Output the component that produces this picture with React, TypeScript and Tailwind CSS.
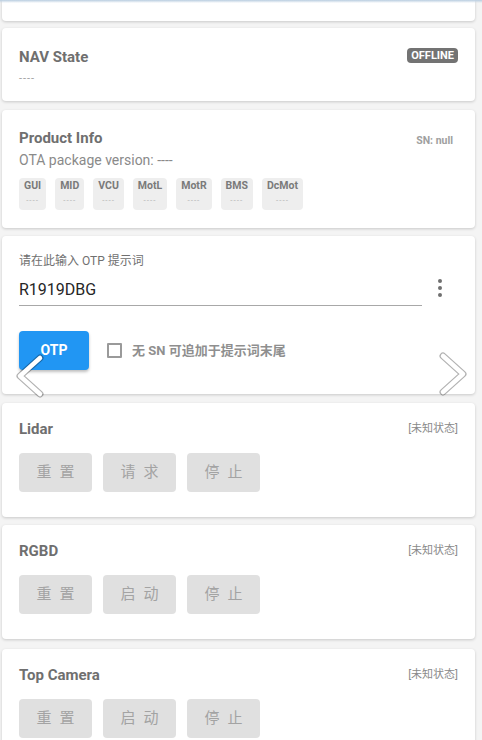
import React from "react";

const font = { fontFamily: 'Roboto, "Noto Sans CJK SC", sans-serif' };

function Card({ children, className = "" }: { children?: React.ReactNode; className?: string }) {
  return (
    <div className={`ml-[2px] mr-[7px] bg-white rounded-[4px] shadow-[0_1px_3px_rgba(0,0,0,0.18)] px-[17px] ${className}`}>
      {children}
    </div>
  );
}

function GrayBtn({ label }: { label: string }) {
  return (
    <div className="w-[73px] h-[39px] rounded-[4px] bg-[#e0e0e0] flex items-center justify-center pl-[8px] text-[15px] tracking-[8px] text-[#a3a3a3]">
      {label}
    </div>
  );
}

function Device({ title, mid }: { title: string; mid: string }) {
  return (
    <Card className="pt-[16px] pb-[25px]">
      <div className="flex items-center justify-between h-[20px]">
        <div className="text-[15px] font-bold text-[#6f6f6f]">{title}</div>
        <div className="text-[11px] text-[#8a8a8a]">[未知状态]</div>
      </div>
      <div className="flex gap-[11px] mt-[14px]">
        <GrayBtn label="重置" />
        <GrayBtn label={mid} />
        <GrayBtn label="停止" />
      </div>
    </Card>
  );
}

const chips = ["GUI", "MID", "VCU", "MotL", "MotR", "BMS", "DcMot"];

export default function App() {
  return (
    <div className="relative bg-[#f4f4f4] min-h-[740px] pb-[20px]" style={font}>
      <div className="absolute top-0 left-0 right-0 h-[3px] bg-gradient-to-b from-[#b9cde0] to-transparent z-10" />
      <div className="ml-[2px] mr-[7px] bg-white rounded-b-[4px] shadow-[0_1px_3px_rgba(0,0,0,0.18)] h-[21px]" />

      <div className="flex flex-col mt-[7px]">
        {/* NAV State */}
        <Card className="pt-[19px] pb-[15px]">
          <div className="flex items-center justify-between h-[20px]">
            <div className="text-[15px] font-bold text-[#6f6f6f]">NAV State</div>
            <div className="h-[15px] px-[4px] rounded-[4px] bg-[#737373] text-white text-[11px] font-bold flex items-center leading-none -mt-[3px]">
              OFFLINE
            </div>
          </div>
          <div className="mt-[5px] text-[11px] leading-[14px] tracking-[1px] text-[#a0a0a0]">----</div>
        </Card>

        {/* Product Info */}
        <Card className="mt-[9px] pt-[18px] pb-[18px]">
          <div className="flex items-center justify-between h-[20px]">
            <div className="text-[15px] font-bold text-[#6f6f6f]">Product Info</div>
            <div className="text-[10.5px] font-bold text-[#a0a0a0] mt-[5px] mr-[5px]">SN: null</div>
          </div>
          <div className="mt-[3px] text-[14px] leading-[18px] text-[#8a8a8a]">OTA package version: ----</div>
          <div className="flex gap-[9px] mt-[9px]">
            {chips.map((c) => (
              <div key={c} className="h-[32px] rounded-[4px] bg-[#eeeeee] px-[5px] flex flex-col items-center pt-[1px]">
                <div className="text-[10.5px] font-bold text-[#7a7a7a] leading-[14px]">{c}</div>
                <div className="text-[8px] text-[#b0b0b0] leading-[12px] tracking-[1px] mt-[2px]">----</div>
              </div>
            ))}
          </div>
        </Card>

        {/* OTP */}
        <Card className="mt-[8px] pt-[17px] pb-[24px]">
          <div className="text-[12px] leading-[16px] text-[#707070]">请在此输入 OTP 提示词</div>
          <div className="flex items-center mt-[6px]">
            <div className="flex-1 h-[31px] border-b border-[#a8a8a8] flex items-center">
              <span className="text-[16px] text-[#262626]">R1919DBG</span>
            </div>
            <div className="w-[36px] flex flex-col items-center gap-[3px] -mt-[6px]">
              <span className="w-[4px] h-[4px] rounded-full bg-[#707070]" />
              <span className="w-[4px] h-[4px] rounded-full bg-[#707070]" />
              <span className="w-[4px] h-[4px] rounded-full bg-[#707070]" />
            </div>
          </div>
          <div className="flex items-center mt-[25px]">
            <div className="w-[70px] h-[39px] rounded-[4px] bg-[#2196f3] shadow-[0_2px_3px_rgba(0,0,0,0.25)] flex items-center justify-center text-white text-[14px] font-bold">
              OTP
            </div>
            <div className="ml-[18px] w-[15px] h-[15px] border-2 border-[#9a9a9a] rounded-[1px]" />
            <div className="ml-[10px] text-[13px] font-bold text-[#8f8f8f]">无 SN 可追加于提示词末尾</div>
          </div>
        </Card>

        <div className="mt-[9px]">
          <Device title="Lidar" mid="请求" />
        </div>
        <div className="mt-[8px]">
          <Device title="RGBD" mid="启动" />
        </div>
        <div className="mt-[10px]">
          <Device title="Top Camera" mid="启动" />
        </div>
      </div>

      {/* overlay chevrons */}
      <svg className="absolute left-[14px] top-[354px] z-20" width="32" height="44" viewBox="0 0 32 44">
        <polyline points="26,4 6,22 26,40" fill="none" stroke="rgba(0,0,0,0.3)" strokeWidth="7" strokeLinecap="round" strokeLinejoin="round" />
        <polyline points="26,4 6,22 26,40" fill="none" stroke="#ffffff" strokeWidth="4.5" strokeLinecap="round" strokeLinejoin="round" />
      </svg>
      <svg className="absolute left-[436px] top-[352px] z-20" width="32" height="44" viewBox="0 0 32 44">
        <polyline points="7,4 27,22 7,40" fill="none" stroke="rgba(0,0,0,0.3)" strokeWidth="7" strokeLinecap="round" strokeLinejoin="round" />
        <polyline points="7,4 27,22 7,40" fill="none" stroke="#ffffff" strokeWidth="4.5" strokeLinecap="round" strokeLinejoin="round" />
      </svg>
    </div>
  );
}
